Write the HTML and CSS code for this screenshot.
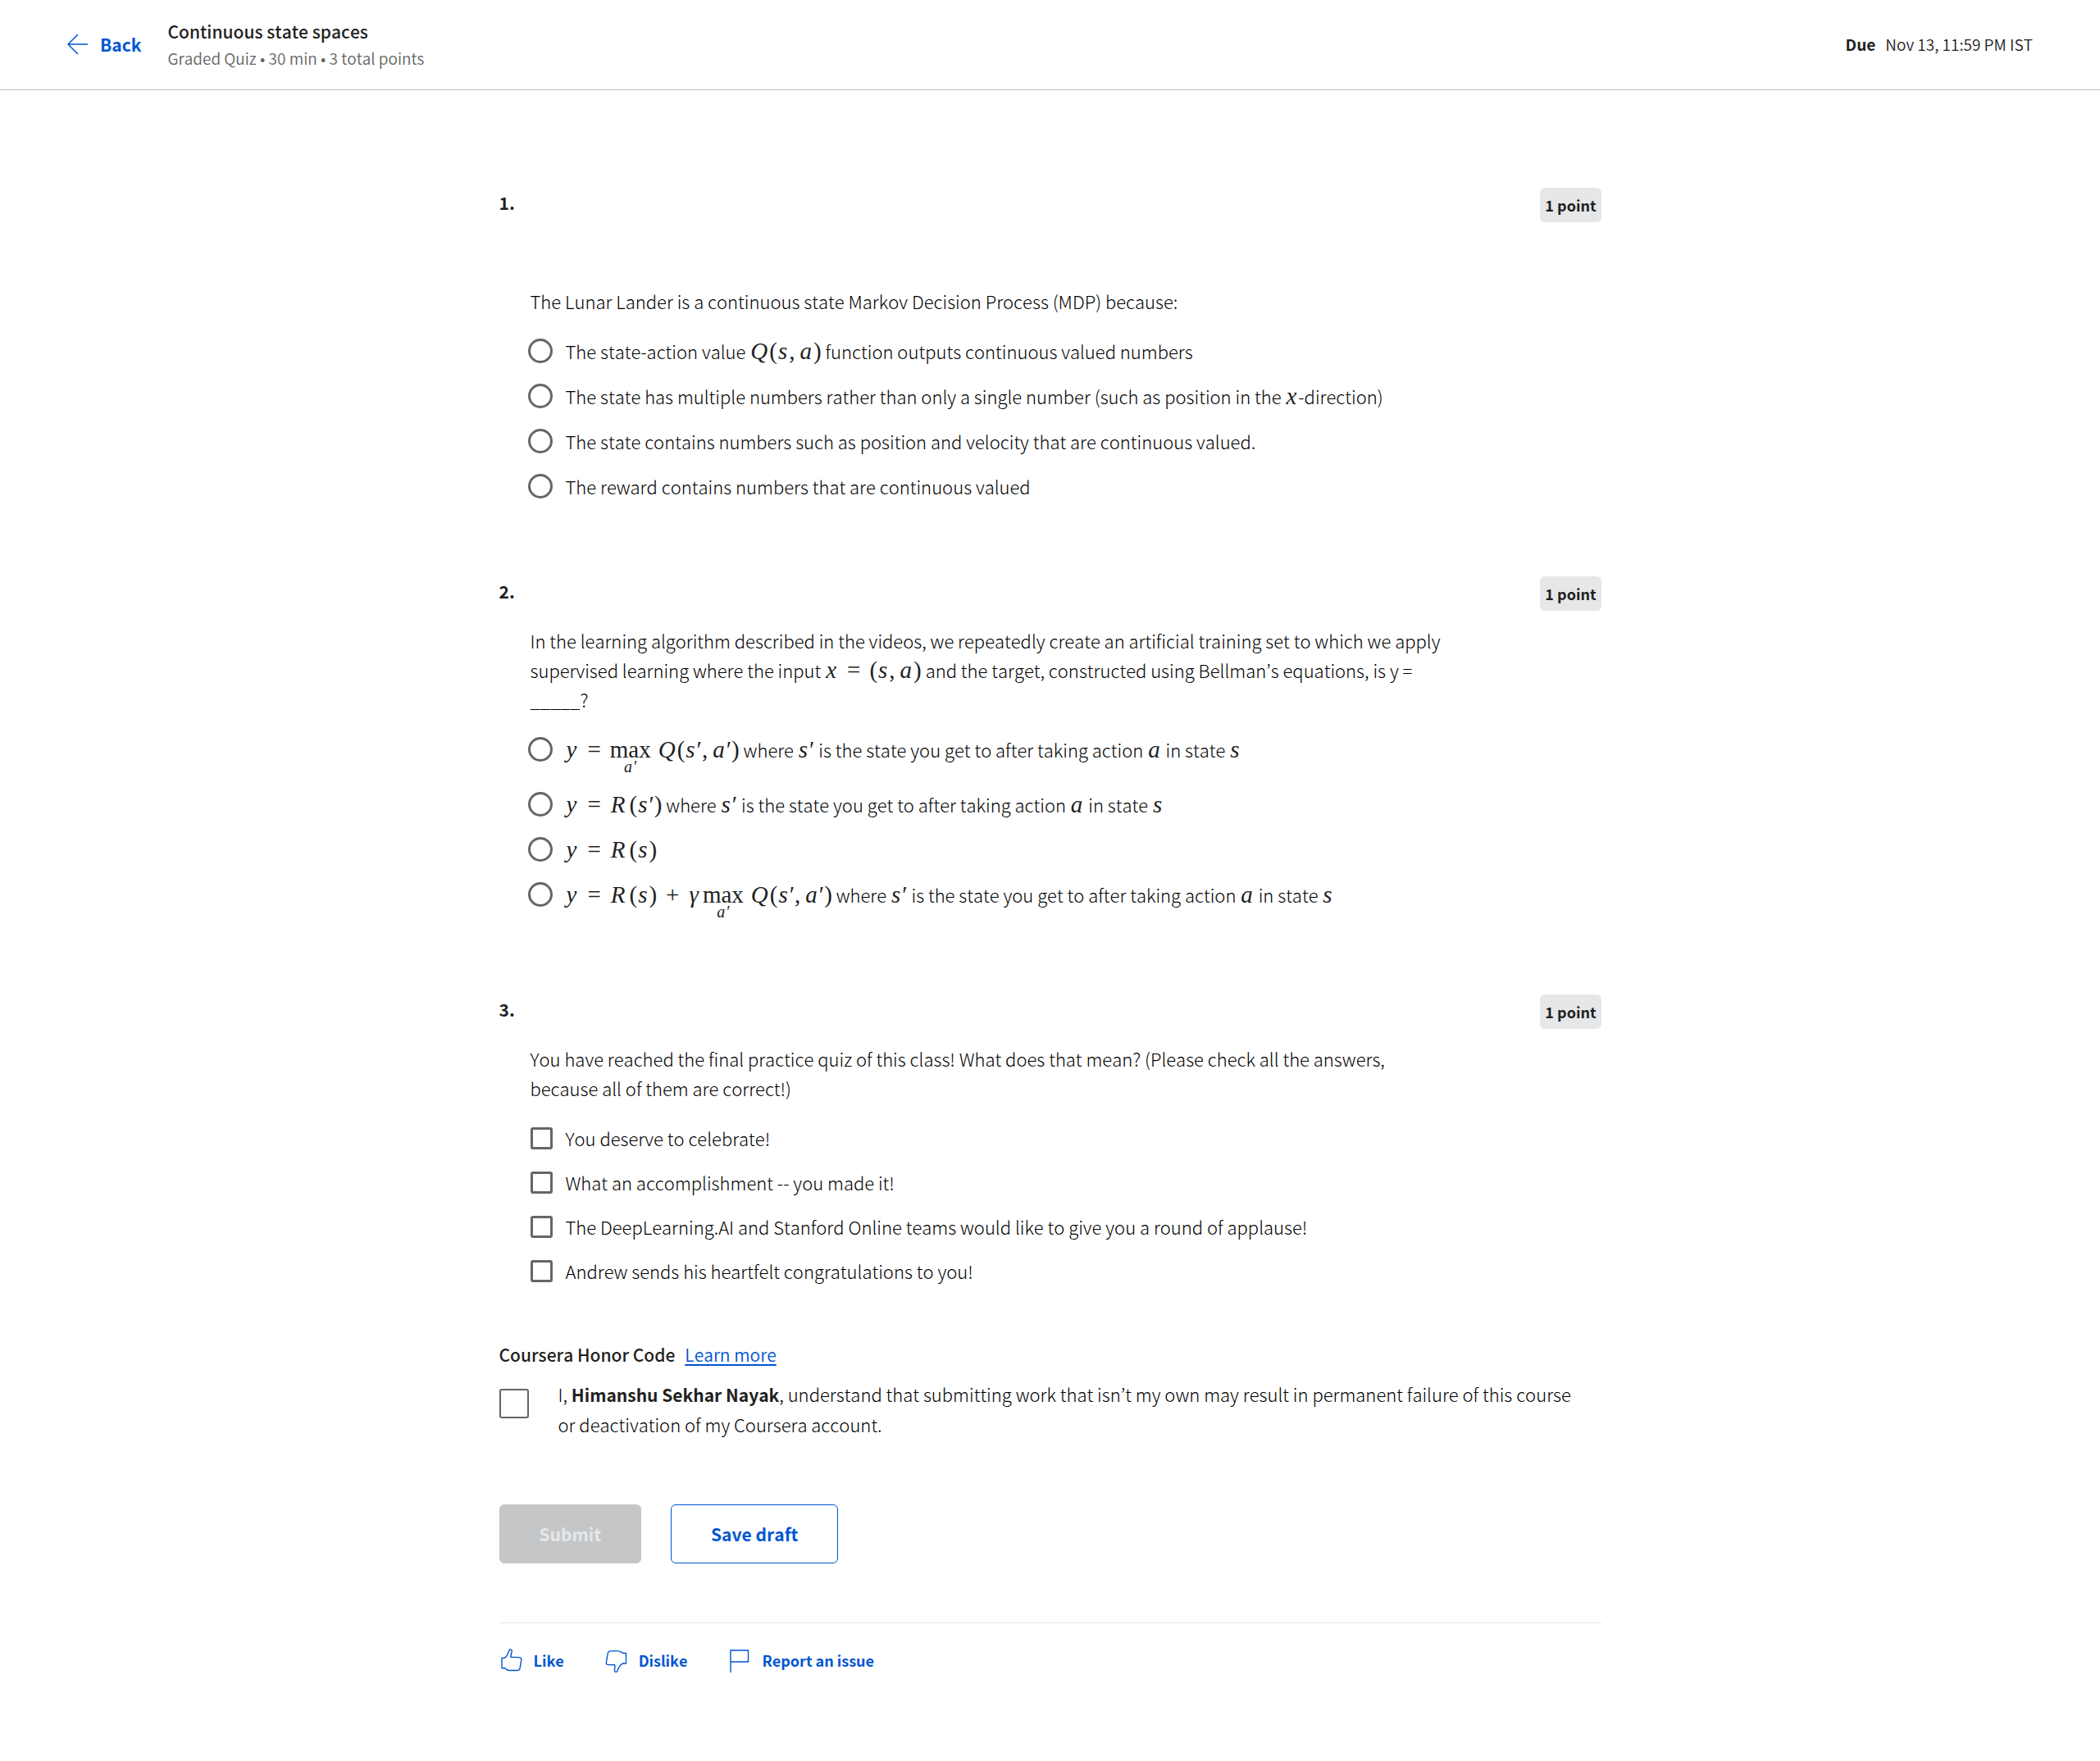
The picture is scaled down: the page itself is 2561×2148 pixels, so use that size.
FILE: index.html
```html
<!DOCTYPE html>
<html lang="en">
<head>
<meta charset="utf-8">
<title>Continuous state spaces</title>
<meta name="viewport" content="width=device-width, initial-scale=1">
<link rel="stylesheet" href="styles.css">
</head>
<body>
<header class="topbar">
  <a class="back" href="#">
    <svg class="back-icon" width="26" height="26" viewBox="0 0 26 26" fill="none" stroke="currentColor" stroke-width="1.5"><path d="M25 13H1.5M13 1 1 13l12 12"/></svg>
    Back
  </a>
  <div class="heading">
    <h1 class="title">Continuous state spaces</h1>
    <p class="subtitle">Graded Quiz • 30 min • 3 total points</p>
  </div>
  <p class="due"><strong>Due</strong><span>Nov 13, 11:59 PM IST</span></p>
</header>

<main class="quiz">
  <section class="question">
    <div class="question-head"><h2 class="number">1.</h2><span class="points">1 point</span></div>
    <div class="question-body spaced">
      <p class="prompt" id="q1">The Lunar Lander is a continuous state Markov Decision Process (MDP) because:</p>
      <div class="options" role="radiogroup" aria-labelledby="q1">
        <label class="option"><input class="radio" type="radio" name="q1"><span>The state-action value <span class="math"><i>Q</i>(<i>s</i><span class="comma">,</span><i>a</i>)</span> function outputs continuous valued numbers</span></label>
        <label class="option"><input class="radio" type="radio" name="q1"><span>The state has multiple numbers rather than only a single number (such as position in the <span class="math"><i>x</i></span>-direction)</span></label>
        <label class="option"><input class="radio" type="radio" name="q1"><span>The state contains numbers such as position and velocity that are continuous valued.</span></label>
        <label class="option"><input class="radio" type="radio" name="q1"><span>The reward contains numbers that are continuous valued</span></label>
      </div>
    </div>
  </section>

  <section class="question">
    <div class="question-head"><h2 class="number">2.</h2><span class="points">1 point</span></div>
    <div class="question-body">
      <p class="prompt" id="q2">In the learning algorithm described in the videos, we repeatedly create an artificial training set to which we apply supervised learning where the input <span class="math"><i>x</i><span class="rel">=</span>(<i>s</i><span class="comma">,</span><i>a</i>)</span> and the target, constructed using Bellman’s equations, is y = _____?</p>
      <div class="options" role="radiogroup" aria-labelledby="q2">
        <label class="option"><input class="radio" type="radio" name="q2"><span><span class="math"><i>y</i><span class="rel">=</span><span class="under"><span>max</span><small><i>a</i>′</small></span><i>Q</i>(<i>s</i>′<span class="comma">,</span><i>a</i>′)</span> where <span class="math"><i>s</i>′</span> is the state you get to after taking action <span class="math"><i>a</i></span> in state <span class="math"><i>s</i></span></span></label>
        <label class="option"><input class="radio" type="radio" name="q2"><span><span class="math"><i>y</i><span class="rel">=</span><i class="wide">R</i>(<i>s</i>′)</span> where <span class="math"><i>s</i>′</span> is the state you get to after taking action <span class="math"><i>a</i></span> in state <span class="math"><i>s</i></span></span></label>
        <label class="option"><input class="radio" type="radio" name="q2"><span><span class="math"><i>y</i><span class="rel">=</span><i class="wide">R</i>(<i>s</i>)</span></span></label>
        <label class="option"><input class="radio" type="radio" name="q2"><span><span class="math"><i>y</i><span class="rel">=</span><i class="wide">R</i>(<i>s</i>)<span class="rel">+</span><i class="wide">γ</i><span class="under"><span>max</span><small><i>a</i>′</small></span><i>Q</i>(<i>s</i>′<span class="comma">,</span><i>a</i>′)</span> where <span class="math"><i>s</i>′</span> is the state you get to after taking action <span class="math"><i>a</i></span> in state <span class="math"><i>s</i></span></span></label>
      </div>
    </div>
  </section>

  <section class="question">
    <div class="question-head"><h2 class="number">3.</h2><span class="points">1 point</span></div>
    <div class="question-body">
      <p class="prompt" id="q3">You have reached the final practice quiz of this class! What does that mean? (Please check all the answers, because all of them are correct!)</p>
      <div class="options checks" role="group" aria-labelledby="q3">
        <label class="option"><input class="check" type="checkbox"><span>You deserve to celebrate!</span></label>
        <label class="option"><input class="check" type="checkbox"><span>What an accomplishment -- you made it!</span></label>
        <label class="option"><input class="check" type="checkbox"><span>The DeepLearning.AI and Stanford Online teams would like to give you a round of applause!</span></label>
        <label class="option"><input class="check" type="checkbox"><span>Andrew sends his heartfelt congratulations to you!</span></label>
      </div>
    </div>
  </section>

  <section class="honor">
    <p class="honor-head"><span class="honor-title">Coursera Honor Code</span><a class="learn" href="#">Learn more</a></p>
    <label class="pledge"><input class="pledge-check" type="checkbox"><span>I, <strong>Himanshu Sekhar Nayak</strong>, understand that submitting work that isn’t my own may result in permanent failure of this course or deactivation of my Coursera account.</span></label>
  </section>

  <div class="actions">
    <button class="button submit" type="submit" disabled>Submit</button>
    <button class="button save" type="button">Save draft</button>
  </div>

  <footer class="feedback">
    <button class="feedback-button" type="button">
      <svg width="28" height="30" viewBox="0 0 28 30" fill="none" stroke="currentColor" stroke-width="1.4" stroke-linejoin="round"><path d="M3 12.500h2.500c3-.4 5-5 6.500-9.500.6-1.600 3.600-1 3.200 1.300-.4 2.400-1.500 4.500-1.300 7l9.600.3c2.500.2 3.800 1 3.300 3.300l-1.700 9.700c-.4 2-1.400 2.800-3.200 2.900H12c-2.200 0-3.500-1.200-5-2.800H3z"/></svg>
      Like
    </button>
    <button class="feedback-button" type="button">
      <svg width="28" height="30" viewBox="0 0 28 30" fill="none" stroke="currentColor" stroke-width="1.4" stroke-linejoin="round"><path d="M26.500 6.500h-4c-1.800-1.200-3.400-2.600-5.600-2.600H7.500c-1.900.1-2.800.8-3.200 2.700L2.400 17.500c-.3 1.800.4 2.800 2 3l8.300.2c.7 1.600-.3 4-.2 7 .1 2.200 2.600 2.200 3.200.7 1.500-4 3.800-8.200 6.800-9.400h4z"/></svg>
      Dislike
    </button>
    <button class="feedback-button" type="button">
      <svg width="28" height="30" viewBox="0 0 28 30" fill="none" stroke="currentColor" stroke-width="1.400"><path d="M4 30V3h21.500v14H4"/></svg>
      Report an issue
    </button>
  </footer>
</main>
</body>
</html>
```
FILE: styles.css
```css
* { box-sizing: border-box; }

body {
  margin: 0;
  background: #fff;
  color: #000;
  font-family: "Noto Sans CJK KR", "Open Sans", sans-serif;
  font-size: 22px;
  font-weight: 300;
  font-kerning: none;
  line-height: 36px;
}

h1, h2, p { margin: 0; }

h1, h2, strong { color: #1f1f1f; }

button, input { margin: 0; font: inherit; }

.topbar {
  display: flex;
  align-items: center;
  height: 110px;
  padding: 0 82px 2px;
  border-bottom: 1px solid #bdbdbd;
}

.back {
  display: flex;
  align-items: center;
  gap: 14px;
  margin-right: 32px;
  color: #0056d2;
  font-size: 21px;
  font-weight: 700;
  text-decoration: none;
}

.heading { flex: 1; }

.title {
  font-size: 21px;
  font-weight: 500;
  line-height: 34px;
}

.subtitle {
  color: #666;
  font-size: 19px;
  font-weight: 350;
  line-height: 32px;
}

.due {
  display: flex;
  gap: 12px;
  color: #1f1f1f;
  font-size: 19px;
  font-weight: 350;
}

.due strong { font-weight: 700; }

.quiz {
  max-width: 1344px;
  margin: 119px auto;
}

.question { margin-bottom: 92px; }

.question-head {
  display: flex;
  align-items: flex-start;
  justify-content: space-between;
}

.number {
  font-size: 21px;
  font-weight: 700;
}

.points {
  padding: 3px 6px;
  border-radius: 6px;
  background: #e5e7e8;
  color: #1f1f1f;
  font-size: 18px;
  font-weight: 700;
}

.question-body {
  max-width: 1158px;
  padding: 18px 0 0 38px;
}

.question-body.spaced { padding-top: 78px; }

.options {
  display: flex;
  flex-direction: column;
  gap: 19px;
  margin-top: 25px;
}

.options.checks { gap: 18px; }

.option {
  display: flex;
  align-items: flex-start;
}

.radio,
.check,
.pledge-check {
  flex: none;
  appearance: none;
  background: #fff;
}

.radio {
  width: 30px;
  height: 30px;
  margin: 3px 16px 0 -3px;
  border: 3px solid #666;
  border-radius: 50%;
}

.check {
  width: 27px;
  height: 27px;
  margin: 5px 16px 0 0;
  border: 3px solid #666;
  border-radius: 3px;
}

.math {
  color: #1f1f1f;
  font-family: "Liberation Serif", serif;
  font-size: 29px;
  font-weight: 400;
  line-height: 24px;
  white-space: nowrap;
}

.math i { padding: 0 2px 0 1px; }

.math .wide { padding-right: 5px; }

.rel { margin: 0 11px; }

.comma { margin-right: 5px; }

.under {
  display: inline-flex;
  flex-direction: column;
  align-items: center;
  margin-right: 8px;
}

.under small {
  font-size: 20px;
  line-height: 18px;
}

.honor { margin-top: -26px; }

.honor-head {
  display: flex;
  gap: 12px;
}

.honor-title {
  color: #1f1f1f;
  font-size: 21px;
  font-weight: 500;
}

.learn {
  color: #0056d2;
  font-weight: 350;
  font-size: 21px;
  text-underline-offset: 3px;
}

.pledge {
  display: flex;
  align-items: flex-start;
  gap: 36px;
  margin-top: 12px;
  padding-right: 18px;
}

.pledge strong {
  font-size: 21px;
  font-weight: 700;
}

.pledge-check {
  width: 36px;
  height: 36px;
  margin-top: 12px;
  border: 2px solid #666;
  border-radius: 3px;
}

.actions {
  display: flex;
  gap: 36px;
  margin: 80px 0 72px;
}

.button {
  height: 72px;
  padding: 0 48px;
  border: 1px solid #0056d2;
  border-radius: 6px;
  font-size: 21px;
  font-weight: 700;
}

.submit {
  border-color: #c4c6c8;
  background: #c4c6c8;
  color: #e5e7e8;
}

.save {
  background: #fff;
  color: #0056d2;
}

.feedback {
  display: flex;
  gap: 49px;
  padding-top: 27px;
  border-top: 1px solid #e5e7e8;
}

.feedback-button {
  display: flex;
  align-items: center;
  gap: 14px;
  padding: 0;
  border: 0;
  background: none;
  color: #0056d2;
  font-size: 18px;
  font-weight: 700;
}
```
